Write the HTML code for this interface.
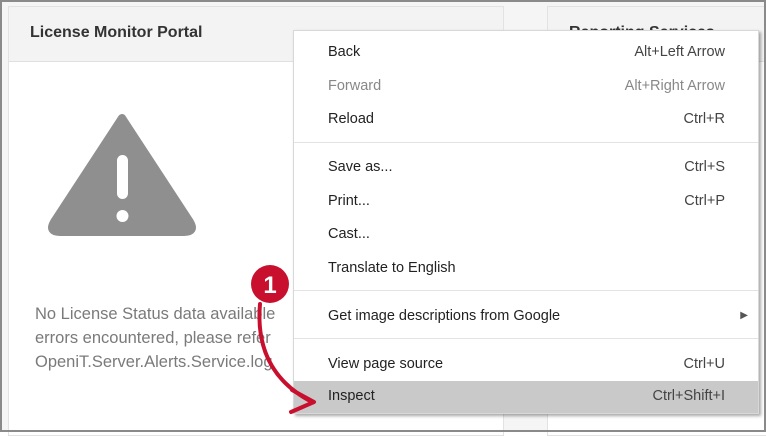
<!DOCTYPE html>
<html><head><meta charset="utf-8"><style>
*{margin:0;padding:0;box-sizing:border-box}
body{width:766px;height:432px;overflow:hidden;background:#fff;font-family:"Liberation Sans",sans-serif;position:relative}
.frame{position:absolute;left:0;top:0;width:766px;height:432px;border:2px solid #8a8a8a}
.bgbar{position:absolute;left:2px;top:2px;width:762px;height:428px;background:#f5f5f5}
.panel{position:absolute;background:#fff;border:1px solid #e2e2e2}
.hdr{position:absolute;left:0;right:0;top:0;height:55px;background:#f3f3f3;border-bottom:1px solid #e0e0e0}
.menu{position:absolute;left:293px;top:30px;width:466px;height:384px;background:#fff;border:1px solid #d8d8d8;box-shadow:2px 2px 3px rgba(0,0,0,.35)}
.it{position:absolute;left:0;width:464px;height:30px;font-size:14.5px;color:#222}
.it span.l{position:absolute;left:34px;top:6px}
.it span.r{position:absolute;right:33px;top:6px;color:#444}
.sep{position:absolute;left:0;width:464px;height:1px;background:#e3e3e3}
.msg{position:absolute;left:35px;top:302px;font-size:16.5px;line-height:24px;color:#7a7a7a;white-space:nowrap}
</style></head><body>
<div class="bgbar"></div>
<div class="panel" style="left:8px;top:6px;width:496px;height:430px"><div class="hdr"></div>
<div style="position:absolute;left:21px;top:17px;font-size:16px;font-weight:bold;color:#333">License Monitor Portal</div></div>
<div class="panel" style="left:547px;top:6px;width:230px;height:430px"><div class="hdr"></div>
<div style="position:absolute;left:21px;top:17px;font-size:16px;font-weight:bold;color:#333">Reporting Services</div></div>
<svg style="position:absolute;left:0;top:0" width="766" height="432">
<path d="M122 118 L190 222 Q196 232 184 232 L60 232 Q48 232 54 222 Z" fill="#8f8f8f" stroke="#8f8f8f" stroke-width="8" stroke-linejoin="round"/>
<rect x="117" y="155" width="11" height="44" rx="5.5" fill="#fff"/>
<circle cx="122.5" cy="216" r="6" fill="#fff"/>
</svg>
<div class="msg">No License Status data available<br>errors encountered, please refer<br>OpeniT.Server.Alerts.Service.log</div>
<div class="menu">
<div class="it" style="top:7px"><span class="l">Back</span><span class="r">Alt+Left Arrow</span></div>
<div class="it" style="top:41px"><span class="l" style="color:#888">Forward</span><span class="r" style="color:#888">Alt+Right Arrow</span></div>
<div class="it" style="top:74px"><span class="l">Reload</span><span class="r">Ctrl+R</span></div>
<div class="sep" style="top:111px"></div>
<div class="it" style="top:122px"><span class="l">Save as...</span><span class="r">Ctrl+S</span></div>
<div class="it" style="top:156px"><span class="l">Print...</span><span class="r">Ctrl+P</span></div>
<div class="it" style="top:189px"><span class="l">Cast...</span></div>
<div class="it" style="top:223px"><span class="l">Translate to English</span></div>
<div class="sep" style="top:259px"></div>
<div class="it" style="top:271px"><span class="l">Get image descriptions from Google</span><span style="position:absolute;right:10px;top:8px;font-size:10px;color:#555">&#9654;</span></div>
<div class="sep" style="top:307px"></div>
<div class="it" style="top:319px"><span class="l">View page source</span><span class="r">Ctrl+U</span></div>
<div class="it" style="top:350px;height:32px;background:#c9c9c9"><span class="l" style="top:7px">Inspect</span><span class="r" style="top:7px">Ctrl+Shift+I</span></div>
</div>
<svg style="position:absolute;left:0;top:0" width="766" height="432">
<path d="M260 304 Q254 372 312 402" fill="none" stroke="#c8102e" stroke-width="4" stroke-linecap="round"/>
<path d="M292 390 L314 402 L291 412" fill="none" stroke="#c8102e" stroke-width="4" stroke-linecap="round" stroke-linejoin="round"/>
<circle cx="270" cy="284" r="19" fill="#c8102e"/>
<text x="270" y="293" text-anchor="middle" font-family="Liberation Sans" font-weight="bold" font-size="24" fill="#fff">1</text>
</svg>
<div class="frame"></div>
</body></html>
